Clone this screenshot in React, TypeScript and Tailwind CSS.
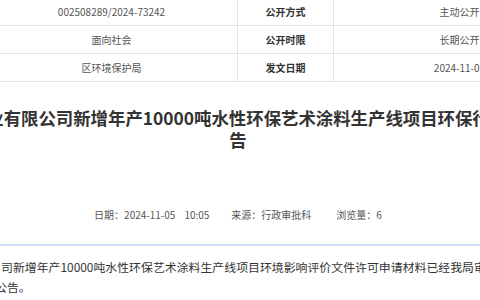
import React from "react";

const rows = [
  ["索引号", "002508289/2024-73242", "公开方式", "主动公开"],
  ["公开范围", "面向社会", "公开时限", "长期公开"],
  ["发布机构", "区环境保护局", "发文日期", "2024-11-05"],
];

const App = () => {
  return (
    <div
      className="w-[480px] h-[300px] overflow-hidden bg-white relative"
      style={{ fontFamily: '"Noto Sans CJK SC", "Noto Sans", sans-serif' }}
    >
      <div className="w-[696px] ml-[-110px]">
        {/* info table */}
        <div className="mt-[-2px] grid grid-cols-[96px_252px_96px_252px]">
          {rows.map((row, i) =>
            row.map((cell, j) => (
              <div
                key={i + "-" + j}
                className={
                  "h-[28px] flex items-center justify-center border-b border-r border-[#e3e3e3] text-[10px] " +
                  (j % 2 === 0 ? "font-bold text-[#333]" : "text-[#555]")
                }
              >
                {cell}
              </div>
            ))
          )}
        </div>

        {/* title */}
        <h1 className="mt-[25px] text-center text-[17.4px] leading-[22px] font-bold text-[#333] whitespace-nowrap">
          关于某实业有限公司新增年产10000吨水性环保艺术涂料生产线项目环保行政许可公
          <br />
          告
        </h1>

        {/* meta */}
        <div className="mt-[56px] flex justify-center text-[10px] leading-[16px] text-[#555] whitespace-nowrap">
          <span>日期：2024-11-05&nbsp;&nbsp;&nbsp;&nbsp;10:05</span>
          <span className="ml-[22px]">来源：行政审批科</span>
          <span className="ml-[25px]">浏览量：6</span>
        </div>
      </div>

      <div className="mt-[21px] h-[2px] bg-[#d2def3]" />

      {/* body */}
      <div className="mt-[11px] text-[11.9px] leading-[20px] text-[#333] whitespace-nowrap">
        <div className="ml-[1px]">
          司新增年产10000吨水性环保艺术涂料生产线项目环境影响评价文件许可申请材料已经我局审查，现予以
        </div>
        <div className="ml-[-5px]">公告。</div>
      </div>
    </div>
  );
};

export default App;
